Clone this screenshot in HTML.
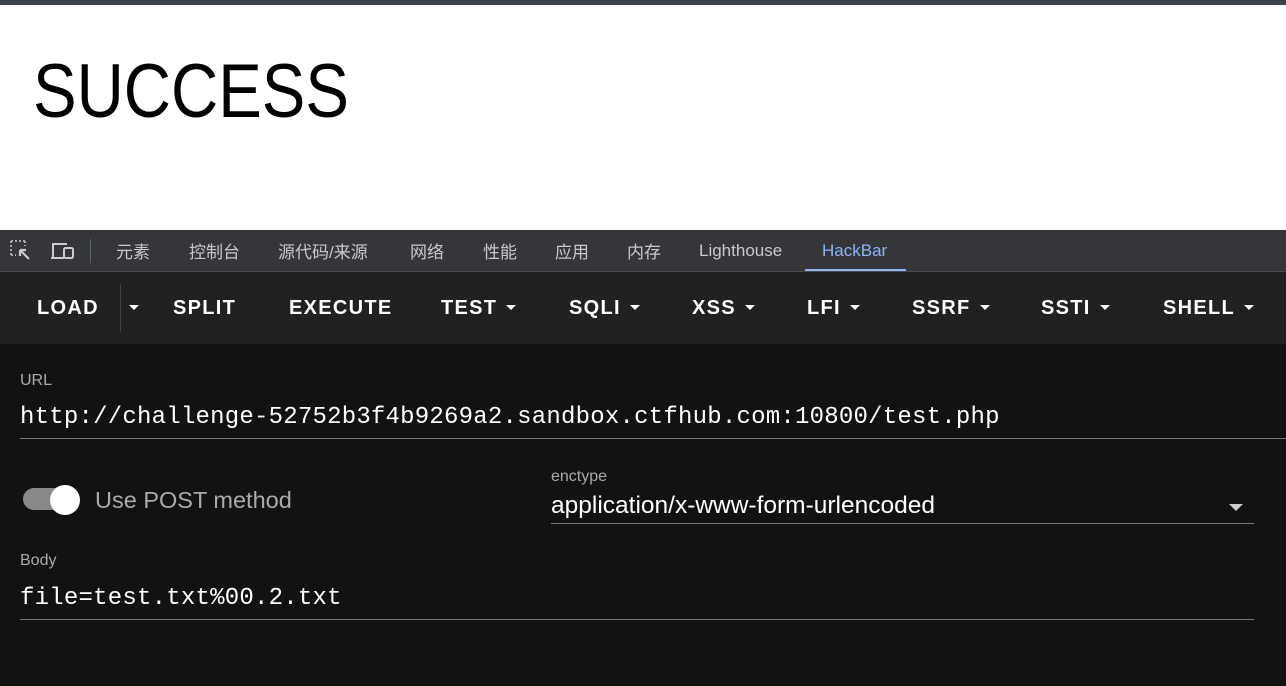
<!DOCTYPE html>
<html><head><meta charset="utf-8"><style>
*{margin:0;padding:0;box-sizing:border-box}
body{width:1286px;height:686px;overflow:hidden;background:#fff;font-family:"Liberation Sans","Noto Sans CJK SC",sans-serif;position:relative}
.topbar{position:absolute;left:0;top:0;width:1286px;height:5px;background:#3c4350}
.succ{position:absolute;left:33px;top:48px;font-size:76px;color:#000;transform:scaleX(0.86);transform-origin:0 0;white-space:nowrap}
.tabs{position:absolute;left:0;top:230px;width:1286px;height:42px;background:#35363a;border-bottom:1px solid #4a4c50}
.tab{position:absolute;top:8px;font-size:17px;color:#c7c9cc}
.tab.l{top:11px}
.hb{position:absolute;left:0;top:272px;width:1286px;height:72px;background:#212121}
.b{position:absolute;top:25px;font-size:20px;font-weight:bold;color:#fff;letter-spacing:1.3px}
.car{display:inline-block;width:0;height:0;border-left:5px solid transparent;border-right:5px solid transparent;border-top:5px solid #fff;margin-left:9px;vertical-align:4px}
.main{position:absolute;left:0;top:344px;width:1286px;height:342px;background:#121212;color:#fff}
.lbl{position:absolute;font-size:16px;color:#aaa}
.mono{position:absolute;font-family:"Liberation Mono",monospace;font-size:24px;color:#fff;letter-spacing:0.22px;white-space:nowrap}
.line{position:absolute;height:1px;background:#777}
</style></head><body>
<div class="topbar"></div>
<div class="succ">SUCCESS</div>
<div class="tabs">
<svg style="position:absolute;left:10px;top:10px" width="22" height="22" viewBox="0 0 22 22"><path d="M1 1h14M1 1v14M15 1v5M1 15h5" stroke="#aaa" stroke-width="2" stroke-dasharray="2 2" fill="none"/><path d="M10 10l9 9M10 10h6M10 10v6" stroke="#ccc" stroke-width="2.2" fill="none"/></svg>
<svg style="position:absolute;left:50px;top:11px" width="26" height="20" viewBox="0 0 26 20"><path d="M3 16V3h14" stroke="#ccc" stroke-width="2" fill="none"/><path d="M1 17h13" stroke="#ccc" stroke-width="2"/><rect x="14" y="7" width="9" height="10" rx="1.5" stroke="#ccc" stroke-width="2" fill="none"/></svg>
<div style="position:absolute;left:90px;top:9px;width:1px;height:24px;background:#5f6368"></div>
<span class="tab" style="left:116px">元素</span>
<span class="tab" style="left:189px">控制台</span>
<span class="tab" style="left:278px">源代码/来源</span>
<span class="tab" style="left:410px">网络</span>
<span class="tab" style="left:483px">性能</span>
<span class="tab" style="left:555px">应用</span>
<span class="tab" style="left:627px">内存</span>
<span class="tab l" style="left:699px">Lighthouse</span>
<span class="tab l" style="left:822px;color:#8ab4f8">HackBar</span>
<div style="position:absolute;left:805px;top:39px;width:101px;height:2px;background:#8ab4f8"></div>
</div>
<div class="hb">
<span class="b" style="left:37px">LOAD</span>
<div style="position:absolute;left:120px;top:12px;width:1px;height:48px;background:#444"></div>
<span class="b" style="left:120px"><span class="car"></span></span>
<span class="b" style="left:173px">SPLIT</span>
<span class="b" style="left:289px">EXECUTE</span>
<span class="b" style="left:441px">TEST<span class="car"></span></span>
<span class="b" style="left:569px">SQLI<span class="car"></span></span>
<span class="b" style="left:692px">XSS<span class="car"></span></span>
<span class="b" style="left:807px">LFI<span class="car"></span></span>
<span class="b" style="left:912px">SSRF<span class="car"></span></span>
<span class="b" style="left:1041px">SSTI<span class="car"></span></span>
<span class="b" style="left:1163px">SHELL<span class="car"></span></span>
</div>
<div class="main">
<span class="lbl" style="left:20px;top:28px">URL</span>
<span class="mono" style="left:20px;top:60px">http://challenge-52752b3f4b9269a2.sandbox.ctfhub.com:10800/test.php</span>
<div class="line" style="left:20px;top:94px;width:1266px"></div>
<div style="position:absolute;left:23px;top:144px;width:54px;height:22px;border-radius:11px;background:#888"></div>
<div style="position:absolute;left:50px;top:141px;width:30px;height:30px;border-radius:50%;background:#fff"></div>
<span style="position:absolute;left:95px;top:143px;font-size:23.5px;color:#aaa">Use POST method</span>
<span class="lbl" style="left:551px;top:124px">enctype</span>
<span style="position:absolute;left:551px;top:148px;font-size:24.5px;color:#fff">application/x-www-form-urlencoded</span>
<div style="position:absolute;left:1229px;top:160px;border-left:7px solid transparent;border-right:7px solid transparent;border-top:7px solid #ccc"></div>
<div class="line" style="left:551px;top:179px;width:703px"></div>
<span class="lbl" style="left:20px;top:208px">Body</span>
<span class="mono" style="left:20px;top:241px">file=test.txt%00.2.txt</span>
<div class="line" style="left:20px;top:275px;width:1234px"></div>
</div>
</body></html>
